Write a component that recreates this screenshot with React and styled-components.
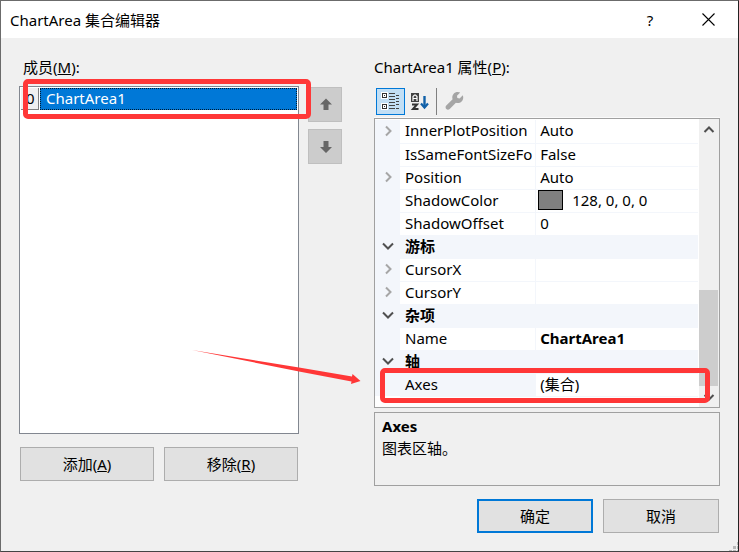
import React from 'react';
import styled, { createGlobalStyle } from 'styled-components'


const GlobalStyle = createGlobalStyle`
*{
    box-sizing: border-box;
}

body{
    margin: 0;
    color: #000;
    font-family: "Noto Sans", "Noto Sans CJK SC", sans-serif;
    font-size: 15px;
    line-height: 20px;
}

button{
    padding: 0;
    color: inherit;
    font: inherit;
}
`

const Dialog = styled.div`
display: flex;
flex-direction: column;
min-height: 100vh;
background: #f0f0f0;
border: 1px solid #6b6b6b;
border-right-color: #222;
border-bottom-color: #444;
position: relative;
`

const TitleBar = styled.header`
display: flex;
align-items: center;
height: 37px;
padding-left: 9px;
background: #fff;

h1{
    flex: 1;
    margin: 0;
    font-size: 15px;
    font-weight: 400;
}
`

const TitleButton = styled.button`
display: flex;
align-items: center;
justify-content: center;
width: 56px;
height: 36px;
background: transparent;
border: 0;

&:last-child{
    width: 60px;
}
`

const Content = styled.main`
flex: 1;
display: grid;
grid-template-columns: minmax(0, 280fr) 75px minmax(0, 346fr);
padding: 19px 18px 0;
position: relative;
`

const Members = styled.section`
display: flex;
flex-direction: column;
padding-bottom: 5px;
`

const Label = styled.h2`
margin: 0 0 9px;
padding-left: ${props => props.$indent || 0};
font-size: 15px;
font-weight: 400;
`

const MemberList = styled.ul`
flex: 1;
margin: 0;
padding: 1px;
list-style: none;
background: #fff;
border: 1px solid #828790;
position: relative;
`

const Member = styled.li`
display: flex;
height: 22px;
line-height: 18px;
`

const MemberIndex = styled.span`
width: 18px;
margin-right: 1px;
padding: 1px 0 0 5px;
background: #f0f0f0;
border-right: 1px solid #808080;
border-bottom: 1px solid #808080;
`

const MemberName = styled.span`
flex: 1;
padding-left: 5px;
color: #fff;
background: #0078d7;
border: 1px dotted #001a30;
`

const MemberActions = styled.div`
display: grid;
grid-template-columns: 1fr 1fr;
gap: 10px;
margin-top: 13px;
padding: 0 1px;
`

const Button = styled.button`
height: 34px;
background: #e1e1e1;
border: ${props => props.$primary ? '2px solid #0078d7' : '1px solid #adadad'};
`

const Order = styled.div`
display: flex;
flex-direction: column;
gap: 7px;
padding-top: 30px;
margin: 0 32px 0 9px;
`

const OrderButton = styled.button`
display: flex;
align-items: center;
justify-content: center;
height: 35px;
background: #ccc;
border: 1px solid #bfbfbf;
`

const Properties = styled.section`
display: flex;
flex-direction: column;
`

const Toolbar = styled.div`
display: flex;
align-items: center;
height: 32px;
padding: 0 2px 1px;
border-bottom: 1px solid #fafafa;
`

const ToolButton = styled.button`
display: flex;
align-items: center;
justify-content: center;
width: 29px;
height: 27px;
background: ${props => props.$active ? '#c2dff5' : 'transparent'};
border: 1px solid ${props => props.$active ? '#0078d7' : 'transparent'};
`

const Separator = styled.span`
width: 1px;
height: 27px;
margin: 0 3px 0 2px;
background: #808080;
`

const PropertyGrid = styled.div`
flex: 1;
display: flex;
background: #fff;
border: 1px solid #a0a0a0;
position: relative;
`

const Rows = styled.div`
flex: 1;
min-width: 0;
padding: 1px 1px 10px 0;
`

const Table = styled.table`
width: 100%;
table-layout: fixed;
border-collapse: collapse;

td, th{
    height: 23px;
    padding: 0 0 2px;
    font-weight: 400;
    text-align: left;
    white-space: nowrap;
}
`

const Gutter = styled.td`
width: 25px;
background: #f3f6fb;
`

const NameCell = styled.th`
background: ${props => props.$selected ? '#f3f6fb' : '#fff'};
border-right: 1px solid #f3f6fb;
border-bottom: 1px solid #f3f6fb;

&&{
    padding-left: 5px;
}
`

const ValueCell = styled.td`
border-bottom: 1px solid #f3f6fb;

&&{
    padding-left: 4px;
    font-weight: ${props => props.$bold ? 700 : 400};
}
`

const CategoryCell = styled.th`
background: #f3f6fb;
border-bottom: 1px solid #f3f6fb;

&&{
    padding-left: 5px;
    font-weight: 700;
}
`

const Expander = styled.button`
display: flex;
align-items: center;
justify-content: center;
width: 25px;
height: 20px;
background: transparent;
border: 0;
`

const ColorValue = styled.span`
display: flex;
align-items: center;
gap: 9px;
`

const Swatch = styled.span`
width: 25px;
height: 20px;
margin-left: -2px;
background: #808080;
border: 1px solid #000;
`

const ScrollBar = styled.div`
display: flex;
flex-direction: column;
width: 20px;
padding-right: 1px;
background: #f0f0f0;
`

const ScrollButton = styled.button`
display: flex;
align-items: center;
justify-content: center;
height: 21px;
background: transparent;
border: 0;
`

const Track = styled.div`
flex: 1;
display: flex;
flex-direction: column;
justify-content: flex-end;
`

const Thumb = styled.div`
height: 39%;
background: #cdcdcd;
`

const Description = styled.div`
height: 74px;
margin-top: 4px;
padding: 3px 7px;
border: 1px solid #a0a0a0;

h3{
    margin: 0;
    font-size: 15px;
    font-weight: 700;
}

p{
    margin: 2px 0 0;
}
`

const Footer = styled.footer`
display: flex;
justify-content: flex-end;
gap: 10px;
padding: 13px 19px 18px;

button{
    width: 116px;
}
`

const Highlight = styled.div`
border: 5px solid #ff3737;
border-radius: 5px;
pointer-events: none;
position: absolute;
z-index: 1;
top: ${props => props.$top};
bottom: ${props => props.$bottom};
left: ${props => props.$left};
right: ${props => props.$right};
height: ${props => props.$height};
`

const Pointer = styled.svg`
pointer-events: none;
position: absolute;
left: 191px;
bottom: 100px;
z-index: 1;
`

const Grip = styled.svg`
position: absolute;
right: 0;
bottom: 0;
`

const rows = [
    { name: 'InnerPlotPosition', value: 'Auto', expandable: true },
    { name: 'IsSameFontSizeFo', value: 'False' },
    { name: 'Position', value: 'Auto', expandable: true },
    { name: 'ShadowColor', value: '128, 0, 0, 0', color: true },
    { name: 'ShadowOffset', value: '0' },
    { category: '游标' },
    { name: 'CursorX', value: '', expandable: true },
    { name: 'CursorY', value: '', expandable: true },
    { category: '杂项' },
    { name: 'Name', value: 'ChartArea1', bold: true },
    { category: '轴' },
    { name: 'Axes', value: '(集合)', selected: true },
]


function Chevron({ d, color = '#505050', width = 2 }){
    return(
        <svg width="12" height="12" viewBox="0 0 12 12" fill="none" stroke={color} strokeWidth={width}>
            <path d={d}/>
        </svg>
    )
}

function OrderIcon({ down }){
    return(
        <svg width="14" height="14" viewBox="-2 0 14 14" fill="#666">
            <path d={down ? 'M3.500 1h5v6H12L6 13 0 7h3.500z' : 'M3.500 12h5V6.500H12L6 .500 0 6.500h3.500z'}/>
        </svg>
    )
}

function CategorizedIcon(){
    return(
        <svg width="19" height="18" viewBox="0 0 19 18" shapeRendering="crispEdges">
            <path fill="#fff" d="M0 0h7v7H0zM0 11h7v7H0z"/>
            <path fill="none" stroke="#333" d="M1.500 1.500h4v4h-4zM1.500 12.500h4v4h-4z"/>
            <path fill="#333" d="M3 3h1v1H3zM3 14h1v1H3z"/>
            <path stroke="#444" d="M8 1.500h6M8 4.500h6M8 7.500h6M8 10.500h6M8 13.500h6M8 16.500h6M15 3.500h3M15 6.500h3M15 9.500h3M15 12.500h3M15 16.500h3"/>
        </svg>
    )
}

function SortIcon(){
    return(
        <svg width="19" height="19" viewBox="0 0 19 19">
            <path fill="#424242" d="M1 1h8v9H1z"/>
            <path fill="none" stroke="#fff" strokeWidth="1.200" d="M3 9V4.500L4.500 3h1L7 4.500V9M3 6.500h4"/>
            <path fill="none" stroke="#333" strokeWidth="2" d="M2 12.500h5L3 17h5.500"/>
            <path fill="none" stroke="#1060a8" strokeWidth="2.400" d="M14.500 4v11"/>
            <path fill="none" stroke="#1060a8" strokeWidth="2.200" d="M11 11.500l3.500 4 3.500-4"/>
        </svg>
    )
}

function WrenchIcon(){
    return(
        <svg width="20" height="20" viewBox="0 0 20 20">
            <path fill="#a5a5a5" d="M17.800 4.200 14.600 7.400 12.300 7 12 4.800 15.200 1.600C12.900.600 10.100 1.100 8.500 3c-1.300 1.600-1.500 3.500-.900 5.200L1.300 14.600c-1 1-1 2.500 0 3.400s2.400.900 3.400-.100l6.200-6.200c1.900.700 4.200.300 5.700-1.200 1.700-1.700 2.100-4.200 1.200-6.300z"/>
        </svg>
    )
}

function PropertyRow({ row }){
    if(row.category){
        return(
            <tr>
                <Gutter>
                    <Expander aria-label={row.category}><Chevron d="M1 3.500 6 8.500l5-5"/></Expander>
                </Gutter>
                <CategoryCell colSpan="2">{row.category}</CategoryCell>
            </tr>
        )
    }

    return(
        <tr>
            <Gutter>
                {row.expandable &&
                    <Expander aria-label={row.name}><Chevron d="M4 1.500 8.500 6 4 10.500" color="#a6a6a6"/></Expander>
                }
            </Gutter>
            <NameCell scope="row" $selected={row.selected}>{row.name}</NameCell>
            <ValueCell $bold={row.bold}>
                {row.color ? <ColorValue><Swatch/>{row.value}</ColorValue> : row.value}
            </ValueCell>
        </tr>
    )
}


export default function App(){


    return(
        <>
            <GlobalStyle/>
            <Dialog role="dialog" aria-labelledby="title">
                <TitleBar>
                    <h1 id="title">ChartArea 集合编辑器</h1>
                    <TitleButton>?</TitleButton>
                    <TitleButton aria-label="Close">
                        <svg width="13" height="13" viewBox="0 0 13 13" stroke="#000" strokeWidth="1.100">
                            <path d="M.5.500l12 12M12.500.500l-12 12"/>
                        </svg>
                    </TitleButton>
                </TitleBar>

                <Content>
                    <Members>
                        <Label id="members" $indent="4px">成员(<u>M</u>):</Label>
                        <MemberList role="listbox" aria-labelledby="members">
                            <Member role="option" aria-selected="true">
                                <MemberIndex>0</MemberIndex>
                                <MemberName>ChartArea1</MemberName>
                            </Member>
                            <Highlight as="li" role="presentation" $top="-8px" $left="3px" $right="-13px" $height="40px"/>
                        </MemberList>
                        <MemberActions>
                            <Button>添加(<u>A</u>)</Button>
                            <Button>移除(<u>R</u>)</Button>
                        </MemberActions>
                    </Members>

                    <Order>
                        <OrderButton aria-label="Move up"><OrderIcon/></OrderButton>
                        <OrderButton aria-label="Move down"><OrderIcon down/></OrderButton>
                    </Order>

                    <Properties>
                        <Label>ChartArea1 属性(<u>P</u>):</Label>
                        <Toolbar>
                            <ToolButton $active aria-label="Categorized"><CategorizedIcon/></ToolButton>
                            <ToolButton aria-label="Alphabetical"><SortIcon/></ToolButton>
                            <Separator/>
                            <ToolButton aria-label="Property pages"><WrenchIcon/></ToolButton>
                        </Toolbar>
                        <PropertyGrid>
                            <Rows>
                                <Table>
                                    <colgroup>
                                        <col style={{ width: 25 }}/>
                                        <col style={{ width: '42%' }}/>
                                        <col/>
                                    </colgroup>
                                    <tbody>
                                        {rows.map((row, i) => <PropertyRow key={i} row={row}/>)}
                                    </tbody>
                                </Table>
                            </Rows>
                            <ScrollBar>
                                <ScrollButton aria-label="Scroll up"><Chevron d="M1.500 8 6 3.500 10.500 8"/></ScrollButton>
                                <Track><Thumb/></Track>
                                <ScrollButton aria-label="Scroll down"><Chevron d="M1.500 4 6 8.500 10.500 4"/></ScrollButton>
                            </ScrollBar>
                            <Highlight $bottom="4px" $left="5px" $right="9px" $height="35px"/>
                        </PropertyGrid>
                        <Description>
                            <h3>Axes</h3>
                            <p>图表区轴。</p>
                        </Description>
                    </Properties>

                    <Pointer width="170" height="36" viewBox="0 0 170 36" fill="#ff3737">
                        <path d="M0 0 107 17.500 160 26.500 160.500 24 168.500 31 159 34 159.500 31.500 107 21.500z"/>
                    </Pointer>
                </Content>

                <Footer>
                    <Button $primary>确定</Button>
                    <Button>取消</Button>
                </Footer>

                <Grip width="9" height="9" viewBox="0 0 9 9" fill="#b8b8b8">
                    <path d="M8 0h1v3H8zM4 4h3v3H4zM8 4h1v3H8zM0 8h3v1H0zM4 8h3v1H4zM8 8h1v1H8z"/>
                </Grip>
            </Dialog>
        </>
    )
}
